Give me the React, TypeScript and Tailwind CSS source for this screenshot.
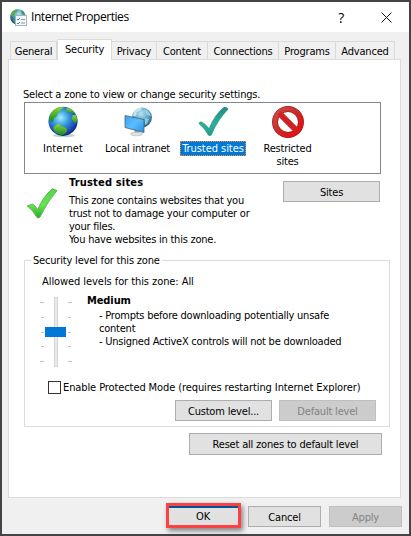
import type { ReactNode } from "react";
import clsx from "clsx";

const tabs = [
  { label: "General", width: "w-[47px]" },
  { label: "Security", width: "w-[55px]", active: true },
  { label: "Privacy", width: "w-[45px]" },
  { label: "Content", width: "w-[51px]" },
  { label: "Connections", width: "w-[71px]" },
  { label: "Programs", width: "w-[57px]" },
  { label: "Advanced", width: "w-[59px]" },
];

const ticks = ["w-1", "w-[3px]", "w-[3px]", "w-[3px]", "w-1"];

function TitleIcon() {
  return (
    <svg width="17" height="17" viewBox="0 0 17 17">
      <defs>
        <radialGradient id="title-globe" cx="55%" cy="30%" r="65%">
          <stop offset="0" stopColor="#b9e6f5" />
          <stop offset="0.5" stopColor="#4aa0d0" />
          <stop offset="1" stopColor="#17448c" />
        </radialGradient>
      </defs>
      <circle cx="8" cy="8" r="7.8" fill="url(#title-globe)" />
      <path d="M1 5C2 2 5 0 8 .5L7 3 5 4 4 7 2 8Z" fill="#5cae3f" />
      <path d="M11 1l3 2 1 3-3-1Z" fill="#3f9c4e" />
      <path d="M3 10l4 1 0 4-3-1Z" fill="#4b9b3c" />
      <rect x="5.5" y="6.5" width="11" height="10" fill="#f4f6f8" stroke="#a9b3bb" />
      <path d="M7 10l1 1 2-2M7 14l1 1 2-2" stroke="#3d86b8" fill="none" />
      <path d="M11 10.5h4M11 14h4" stroke="#8b98a6" />
    </svg>
  );
}

function GlobeIcon() {
  return (
    <svg width="32" height="32" viewBox="0 0 32 32">
      <defs>
        <radialGradient id="globe" cx="42%" cy="38%" r="65%">
          <stop offset="0" stopColor="#a6ecff" />
          <stop offset="0.4" stopColor="#3a9fe0" />
          <stop offset="0.75" stopColor="#1f53c0" />
          <stop offset="1" stopColor="#101f78" />
        </radialGradient>
        <linearGradient id="land" x1="0" y1="0" x2="0" y2="1">
          <stop offset="0" stopColor="#8ed634" />
          <stop offset="1" stopColor="#148a24" />
        </linearGradient>
      </defs>
      <ellipse cx="17" cy="29.5" rx="11" ry="1.8" fill="#c9ced3" />
      <circle cx="16" cy="15.3" r="14.6" fill="url(#globe)" />
      <path d="M3 9C5 4 10 1 15 .9l2 1-3 1-1 3-2 1-1 3-3 2-1 4-3-1-1-2Z" fill="url(#land)" />
      <path d="M20 2l4 1 3 3-1 2-3-2-2 1-2-2Z" fill="url(#land)" />
      <path d="M26 9l3 0 1.5 5-2 4-2-3-2-2Z" fill="url(#land)" />
      <path d="M9 19C11 17 13 18 14 20L19 22Q21 24 19 27L16 29Q11 29 8 26L6 22Z" fill="url(#land)" />
    </svg>
  );
}

function IntranetIcon() {
  return (
    <svg width="32" height="32" viewBox="0 0 32 32">
      <defs>
        <radialGradient id="intranet-globe" cx="45%" cy="30%" r="70%">
          <stop offset="0" stopColor="#b9e4f3" />
          <stop offset="0.55" stopColor="#5ba6c8" />
          <stop offset="1" stopColor="#1f5c88" />
        </radialGradient>
        <linearGradient id="screen" x1="0" y1="0" x2="1" y2="1">
          <stop offset="0" stopColor="#35a3f3" />
          <stop offset="0.5" stopColor="#5cbcff" />
          <stop offset="1" stopColor="#1e91e8" />
        </linearGradient>
      </defs>
      <circle cx="20" cy="11.5" r="10" fill="url(#intranet-globe)" />
      <path d="M12 5l4-3 4 0-2 3-3 1-1 4h-3Z" fill="#c7e2e9" />
      <path d="M22 3l4 2 3 5-4-1-2-3Z" fill="#9ccddd" />
      <path d="M23 12l4 1-2 5-2 1Z" fill="#8ec3d5" />
      <path d="M12 23l5 2v3h-4Z" fill="#9ba7ae" />
      <ellipse cx="14.5" cy="28" rx="6" ry="1.8" fill="#dfe4e7" stroke="#a7b0b6" strokeWidth=".6" />
      <path d="M3 9.5l19 4v13L3 21.5Z" fill="url(#screen)" stroke="#52606b" strokeWidth=".8" />
    </svg>
  );
}

function TrustedIcon() {
  return (
    <svg width="32" height="32" viewBox="0 0 32 32">
      <defs>
        <linearGradient id="teal-check" x1="0" y1="0" x2="0" y2="1">
          <stop offset="0" stopColor="#258b84" />
          <stop offset="0.6" stopColor="#31ae97" />
          <stop offset="1" stopColor="#25998a" />
        </linearGradient>
      </defs>
      <path
        d="M1.5 17.5Q2.5 15 5 15.7Q8.5 17.5 12 22Q17 9 26.5 1.2Q30 .5 31.5 3Q21 14 14.5 29.3Q12.5 30.8 11 29Q7 22 1.5 17.5Z"
        fill="url(#teal-check)"
      />
    </svg>
  );
}

function RestrictedIcon() {
  return (
    <svg width="32" height="32" viewBox="0 0 32 32">
      <defs>
        <linearGradient id="ring" x1="0" y1="0" x2="1" y2="1">
          <stop offset="0" stopColor="#cf4b4b" />
          <stop offset="0.5" stopColor="#c92a2a" />
          <stop offset="1" stopColor="#ee0808" />
        </linearGradient>
      </defs>
      <circle cx="16" cy="16" r="13" fill="#fff" stroke="#a81e1e" strokeWidth="6" />
      <path d="M7 7l18 18" stroke="#b32020" strokeWidth="6" />
      <circle cx="16" cy="16" r="13" fill="none" stroke="url(#ring)" strokeWidth="4.6" />
      <path d="M7 7l18 18" stroke="#d02222" strokeWidth="4.6" />
    </svg>
  );
}

function GreenCheck() {
  return (
    <svg width="32" height="32" viewBox="0 0 32 32">
      <defs>
        <linearGradient id="green-check" x1="0" y1="0" x2="0" y2="1">
          <stop offset="0" stopColor="#4bd944" />
          <stop offset="0.55" stopColor="#68e452" />
          <stop offset="1" stopColor="#20b01c" />
        </linearGradient>
      </defs>
      <path
        d="M1.2 18L6.5 16Q9.5 18 11.8 21.5Q17 8.5 26.5 .8L31 2.6Q21 14 14 29L12 30.2L10.5 28.8Q7 22 1.2 18Z"
        fill="url(#green-check)"
        stroke="#5da655"
        strokeWidth=".9"
        strokeLinejoin="round"
      />
    </svg>
  );
}

function Button({
  children,
  className,
  disabled,
}: {
  children: ReactNode;
  className?: string;
  disabled?: boolean;
}) {
  return (
    <button
      disabled={disabled}
      className={clsx(
        "flex shrink-0 items-center justify-center border pt-px whitespace-nowrap",
        disabled ? "border-[#bfbfbf] bg-[#cccccc] text-[#838383]" : "border-[#adadad] bg-[#e1e1e1]",
        className
      )}
    >
      {children}
    </button>
  );
}

function Zone({ icon, children, className }: { icon: ReactNode; children: ReactNode; className?: string }) {
  return (
    <div className={clsx("flex shrink-0 flex-col items-center text-center", className)}>
      {icon}
      {children}
    </div>
  );
}

export default function App() {
  return (
    <div className="flex h-[536px] w-[411px] flex-col border-2 border-[#444446] bg-[#f0f0f0] font-['DejaVu_Sans_Condensed','DejaVu_Sans',sans-serif] text-[11px] leading-[13px] tracking-[-0.19px] text-black [font-stretch:condensed]">
      {/* Title bar */}
      <header className="flex h-[30px] shrink-0 items-center bg-white pl-[8px] font-['Open_Sans',sans-serif] [font-stretch:normal]">
        <TitleIcon />
        <h1 className="ml-1 text-[12px] leading-4 tracking-[-0.45px]">Internet Properties</h1>
        <span className="ml-auto text-[14px]">?</span>
        <svg className="mr-[17px] ml-[37px]" width="11" height="11" viewBox="0 0 11 11">
          <path d="M.5.5l10 10M10.5.5l-10 10" stroke="#111" />
        </svg>
      </header>

      {/* Tabs */}
      <nav className="mt-[7px] flex h-5 shrink-0 items-end pl-2">
        {tabs.map((tab) => (
          <div
            key={tab.label}
            className={clsx(
              "flex shrink-0 justify-center border-[#dadada] whitespace-nowrap",
              tab.width,
              tab.active
                ? "relative z-10 -mb-px h-[21px] border-x border-t bg-white pt-[3px]"
                : "h-[18px] border-t border-r pt-[3px] first:border-l"
            )}
          >
            {tab.label}
          </div>
        ))}
      </nav>

      <main className="ml-[6px] h-[439px] w-[393px] shrink-0 border border-[#dcdcdc] bg-white pt-[28px] pl-[15px]">
        <p className="ml-[-1px] h-[14px] whitespace-nowrap">Select a zone to view or change security settings.</p>

        <div className="flex h-[72px] w-[357px] border border-[#828790] pt-[3px]">
          <Zone icon={<GlobeIcon />} className="w-[76px]">
            <span className="mt-[4px] tracking-[0.1px]">Internet</span>
          </Zone>
          <Zone icon={<IntranetIcon />} className="ml-px w-[71px]">
            <span className="mt-[4px] tracking-[-0.22px] whitespace-nowrap">Local intranet</span>
          </Zone>
          <Zone icon={<TrustedIcon />} className="ml-[7px] w-[66px]">
            <span className="mt-[3px] w-[66px] border border-dotted border-[#ff8728] bg-[#0078d7] tracking-[-0.05px] whitespace-nowrap text-white">
              Trusted sites
            </span>
          </Zone>
          <Zone icon={<RestrictedIcon />} className="ml-3 w-[60px]">
            <span className="mt-[4px] pr-px">Restricted sites</span>
          </Zone>
        </div>

        <div className="flex h-[80px]">
          <div className="mt-[14px] ml-[2px]">
            <GreenCheck />
          </div>
          <div className="mt-[2px] ml-[11px] w-[190px] whitespace-nowrap">
            <h2 className="font-bold tracking-[0.18px]">Trusted sites</h2>
            <p className="mt-[5px] tracking-[-0.23px]">
              This zone contains websites that you
              <br />
              trust not to damage your computer or
              <br />
              your files.
              <br />
              You have websites in this zone.
            </p>
          </div>
          <Button className="mt-[7px] ml-6 h-[21px] w-[97px]">Sites</Button>
        </div>

        <fieldset className="h-[173px] w-[366px] border border-[#dcdcdc]">
          <legend className="ml-[6px] px-[2px]">Security level for this zone</legend>
          <p className="mt-[8px] ml-[17px] tracking-[-0.07px]">Allowed levels for this zone: All</p>
          <div className="flex">
            <div className="mt-[9px] ml-[15px] flex h-[73px] w-8 justify-between">
              <div className="mt-[5px] flex h-[60px] w-1 flex-col items-end justify-between">
                {ticks.map((width, i) => (
                  <i key={i} className={clsx("h-px bg-[#c4c4c4]", width)} />
                ))}
              </div>
              <div className="relative h-[70px] w-1 border border-[#d6d6d6] bg-[#e7eaea]">
                <div className="absolute top-[29px] left-[-10px] h-[10px] w-[21px] bg-[#0078d7]" />
              </div>
              <div className="mt-[5px] flex h-[60px] w-1 flex-col justify-between">
                {ticks.map((width, i) => (
                  <i key={i} className={clsx("h-px bg-[#c4c4c4]", width)} />
                ))}
              </div>
            </div>
            <div className="mt-[6px] ml-[15px] whitespace-nowrap">
              <h3 className="font-bold tracking-[-0.1px]">Medium</h3>
              <p className="mt-[2px] ml-3 tracking-[-0.23px]">
                - Prompts before downloading potentially unsafe
                <br />
                content
                <br />- Unsigned ActiveX controls will not be downloaded
              </p>
            </div>
          </div>
          <label className="mt-[11px] ml-[23px] flex items-center tracking-[-0.1px] whitespace-nowrap">
            <i className="mr-[2px] size-[13px] shrink-0 border border-[#333]" />
            Enable Protected Mode (requires restarting Internet Explorer)
          </label>
          <div className="mt-[6px] ml-[150px] flex gap-[7px]">
            <Button className="h-[21px] w-[97px]">Custom level...</Button>
            <Button className="h-[21px] w-[97px]" disabled>
              Default level
            </Button>
          </div>
        </fieldset>

        <Button className="mt-[6px] ml-[165px] h-[22px] w-[193px]">Reset all zones to default level</Button>
      </main>

      <footer className="mt-[5px] flex pl-[164px]">
        <div className="h-[25px] w-[75px] border-3 border-[#fb4141] shadow-[2px_3px_5px_rgba(0,0,0,0.45)]">
          <button className="flex h-full w-full items-center justify-center border-t-2 border-[#005499] bg-[#e1e1e1] pr-px">
            OK
          </button>
        </div>
        <Button className="mt-[3px] ml-[7px] h-[21px] w-[73px]">Cancel</Button>
        <Button className="mt-[3px] ml-2 h-[21px] w-[73px]" disabled>
          Apply
        </Button>
      </footer>
    </div>
  );
}
